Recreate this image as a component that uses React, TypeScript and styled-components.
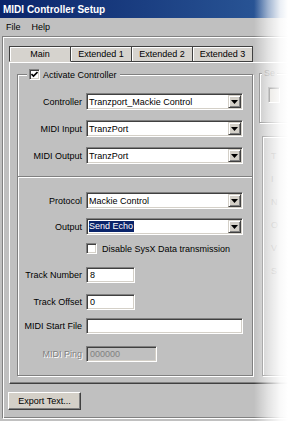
import React from 'react';
import styled, { createGlobalStyle, css } from 'styled-components';

const GlobalStyle = createGlobalStyle`
  html, body {
    margin: 0;
    padding: 0;
    background: #fff;
  }
  body {
    font-family: "Liberation Sans", Arial, sans-serif;
    font-size: 9px;
    color: #000;
  }
`;

const Window = styled.div`
  position: relative;
  width: 290px;
  height: 421px;
  overflow: hidden;
  background: #c0c0c0;
  display: flex;
  flex-direction: column;
`;

const TitleBar = styled.div`
  flex: none;
  height: 18px;
  display: flex;
  align-items: center;
  padding-left: 3px;
  background: linear-gradient(to right, #0a246a, #2c5a9a);
  color: #fff;
  font-weight: bold;
  font-size: 10px;
`;

const MenuBar = styled.div`
  flex: none;
  height: 18px;
  display: flex;
  align-items: center;
  gap: 11px;
  padding-left: 6px;
`;

const Client = styled.div`
  flex: 1;
  margin: 0 0 2px 2px;
  border-top: 1px solid #808080;
  border-left: 1px solid #808080;
  border-bottom: 1px solid #fff;
  box-shadow: inset 1px 1px 0 #fff, inset 0 -1px 0 #808080;
  padding: 9px 0 0 6px;
  display: flex;
  flex-direction: column;
`;

const TabRow = styled.div`
  display: flex;
  height: 16px;
`;

const Tab = styled.div<{ $active?: boolean; $first?: boolean; $width: number }>`
  box-sizing: border-box;
  width: ${p => p.$width}px;
  display: flex;
  align-items: center;
  justify-content: center;
  background: #d6d3ce;
  border-top: 1px solid #404040;
  border-right: 1px solid #404040;
  border-left: ${p => (p.$first ? '1px solid #404040' : 'none')};
  border-bottom: 1px solid ${p => (p.$active ? '#d6d3ce' : '#404040')};
  box-shadow: inset 1px 1px 0 #fff;
`;

const TabPanel = styled.div`
  display: flex;
  gap: 6px;
  height: 322px;
  box-sizing: border-box;
  border-top: 1px solid #fff;
  border-left: 1px solid #fff;
  border-bottom: 1px solid #404040;
  box-shadow: inset 0 -1px 0 #808080;
  padding: 11px 0 7px 7px;
`;

const Group = styled.div`
  position: relative;
  flex: none;
  width: 236px;
  box-sizing: border-box;
  border: 1px solid #808080;
  box-shadow: inset 1px 1px 0 #fff, 1px 1px 0 #fff;
`;

const Legend = styled.div`
  position: absolute;
  top: -6px;
  left: 9px;
  height: 11px;
  padding: 0 3px 0 2px;
  display: flex;
  align-items: center;
  gap: 3px;
  background: #c0c0c0;
`;

const CheckBox = styled.span`
  flex: none;
  width: 11px;
  height: 11px;
  box-sizing: border-box;
  background: #fff;
  border-top: 1px solid #808080;
  border-left: 1px solid #808080;
  border-right: 1px solid #fff;
  border-bottom: 1px solid #fff;
  box-shadow: inset 1px 1px 0 #404040, inset -1px -1px 0 #d4d0c8;
  display: flex;
  align-items: center;
  justify-content: center;
`;

const Section = styled.div<{ $divided?: boolean }>`
  display: flex;
  flex-direction: column;
  padding: ${p => (p.$divided ? '15px 9px 13px 4px' : '18px 9px 12px 4px')};
  ${p =>
    p.$divided &&
    css`
      border-top: 1px solid #808080;
      box-shadow: inset 0 1px 0 #fff;
    `}
`;

const Row = styled.div<{ $top?: number }>`
  display: grid;
  grid-template-columns: 60px 1fr;
  column-gap: 4px;
  align-items: center;
  margin-top: ${p => p.$top ?? 0}px;
`;

const Label = styled.span<{ $disabled?: boolean }>`
  justify-self: end;
  white-space: nowrap;
  color: ${p => (p.$disabled ? '#808080' : '#000')};
  text-shadow: ${p => (p.$disabled ? '1px 1px 0 #fff' : 'none')};
`;

const sunken = css`
  box-sizing: border-box;
  border-top: 1px solid #808080;
  border-left: 1px solid #808080;
  border-right: 1px solid #fff;
  border-bottom: 1px solid #fff;
  box-shadow: inset 1px 1px 0 #404040, inset -1px -1px 0 #d4d0c8;
`;

const Select = styled.div`
  ${sunken};
  height: 17px;
  padding: 1px;
  background: #fff;
  display: flex;
`;

const SelectValue = styled.span`
  flex: 1;
  display: flex;
  align-items: center;
  padding-left: 1px;
  white-space: nowrap;
  overflow: hidden;
`;

const Highlight = styled.span`
  background: #0a246a;
  color: #fff;
  line-height: 11px;
  padding: 0 1px 0 0;
`;

const DropButton = styled.span`
  flex: none;
  width: 13px;
  box-sizing: border-box;
  background: #d4d0c8;
  border-top: 1px solid #d4d0c8;
  border-left: 1px solid #d4d0c8;
  border-right: 1px solid #404040;
  border-bottom: 1px solid #404040;
  box-shadow: inset 1px 1px 0 #fff, inset -1px -1px 0 #808080;
  display: flex;
  align-items: center;
  justify-content: center;
`;

const TextInput = styled.div<{ $width?: number; $disabled?: boolean }>`
  ${sunken};
  height: 16px;
  width: ${p => (p.$width ? `${p.$width}px` : 'auto')};
  padding: 0 3px;
  display: flex;
  align-items: center;
  background: ${p => (p.$disabled ? '#c0c0c0' : '#fff')};
  color: ${p => (p.$disabled ? '#808080' : '#000')};
`;

const CheckLine = styled.span`
  display: flex;
  align-items: center;
  gap: 5px;
`;

const SideColumn = styled.div`
  display: flex;
  flex-direction: column;
  gap: 13px;
  margin-top: -1px;
  flex: 1;
`;

const SideGroup = styled.div<{ $indent?: number; $grow?: boolean }>`
  position: relative;
  margin-left: ${p => p.$indent ?? 0}px;
  border: 1px solid #808080;
  box-shadow: inset 1px 1px 0 #fff, 1px 1px 0 #fff;
  color: #808080;
  ${p =>
    p.$grow
      ? css`
          flex: 1;
          padding: 14px 0 0 8px;
          display: flex;
          flex-direction: column;
          gap: 13px;
        `
      : css`
          height: 50px;
          box-sizing: border-box;
          padding: 13px 0 0 8px;
        `}
`;

const SideLegend = styled.span`
  position: absolute;
  top: -6px;
  left: 2px;
  padding: 0 2px;
  background: #c0c0c0;
`;

const SideField = styled.div`
  ${sunken};
  width: 12px;
  height: 16px;
  background: #d4d0c8;
`;

const Footer = styled.div`
  display: flex;
  padding-top: 8px;
`;

const Button = styled.button`
  margin: 0 0 0 -1px;
  width: 73px;
  height: 18px;
  padding: 0;
  font: inherit;
  color: #000;
  background: #d4d0c8;
  border-top: 1px solid #fff;
  border-left: 1px solid #fff;
  border-right: 1px solid #404040;
  border-bottom: 1px solid #404040;
  box-shadow: inset -1px -1px 0 #808080;
`;

const Fade = styled.div`
  position: absolute;
  inset: 0;
  pointer-events: none;
  background: linear-gradient(
    to right,
    rgba(255, 255, 255, 0) 254px,
    rgba(255, 255, 255, 0.55) 268px,
    rgba(255, 255, 255, 0.9) 280px,
    #fff 288px
  );
`;

const Check = () => (
  <svg width="7" height="7" viewBox="0 0 7 7">
    <path d="M0.5 3 L2.5 5 L6.5 1" fill="none" stroke="#000" strokeWidth="1.6" />
  </svg>
);

const Arrow = () => (
  <svg width="7" height="4" viewBox="0 0 7 4">
    <path d="M0 0 H7 L3.5 4 Z" fill="#000" />
  </svg>
);

const Combo = ({ value, selected }: { value: string; selected?: boolean }) => (
  <Select>
    <SelectValue>{selected ? <Highlight>{value}</Highlight> : value}</SelectValue>
    <DropButton>
      <Arrow />
    </DropButton>
  </Select>
);

const tabs = [
  { name: 'Main', width: 62 },
  { name: 'Extended 1', width: 61 },
  { name: 'Extended 2', width: 61 },
  { name: 'Extended 3', width: 60 },
];

// the greyed-out panel to the right is cut off by the fade; only first letters show
const sideLabels = ['T', 'I', 'N', 'O', 'V', 'S'];

const App = () => (
  <>
    <GlobalStyle />
    <Window>
      <TitleBar>MIDI Controller Setup</TitleBar>
      <MenuBar>
        <span>File</span>
        <span>Help</span>
      </MenuBar>

      <Client>
        <TabRow>
          {tabs.map((t, i) => (
            <Tab key={t.name} $width={t.width} $first={i === 0} $active={i === 0}>
              {t.name}
            </Tab>
          ))}
        </TabRow>

        <TabPanel>
          <Group>
            <Legend>
              <CheckBox>
                <Check />
              </CheckBox>
              <span>Activate Controller</span>
            </Legend>

            <Section>
              <Row>
                <Label>Controller</Label>
                <Combo value="Tranzport_Mackie Control" />
              </Row>
              <Row $top={10}>
                <Label>MIDI Input</Label>
                <Combo value="TranzPort" />
              </Row>
              <Row $top={10}>
                <Label>MIDI Output</Label>
                <Combo value="TranzPort" />
              </Row>
            </Section>

            <Section $divided>
              <Row>
                <Label>Protocol</Label>
                <Combo value="Mackie Control" />
              </Row>
              <Row $top={9}>
                <Label>Output</Label>
                <Combo value="Send Echo" selected />
              </Row>
              <Row $top={8}>
                <span />
                <CheckLine>
                  <CheckBox />
                  <span>Disable SysX Data transmission</span>
                </CheckLine>
              </Row>
              <Row $top={13}>
                <Label>Track Number</Label>
                <TextInput $width={49}>8</TextInput>
              </Row>
              <Row $top={11}>
                <Label>Track Offset</Label>
                <TextInput $width={49}>0</TextInput>
              </Row>
              <Row $top={8}>
                <Label>MIDI Start File</Label>
                <TextInput />
              </Row>
              <Row $top={12}>
                <Label $disabled>MIDI Ping</Label>
                <TextInput $width={71} $disabled>000000</TextInput>
              </Row>
            </Section>
          </Group>

          <SideColumn>
            <SideGroup>
              <SideLegend>Se</SideLegend>
              <SideField />
            </SideGroup>
            <SideGroup $indent={3} $grow>
              {sideLabels.map(l => (
                <span key={l}>{l}</span>
              ))}
            </SideGroup>
          </SideColumn>
        </TabPanel>

        <Footer>
          <Button>Export Text...</Button>
        </Footer>
      </Client>

      <Fade />
    </Window>
  </>
);

export default App;
